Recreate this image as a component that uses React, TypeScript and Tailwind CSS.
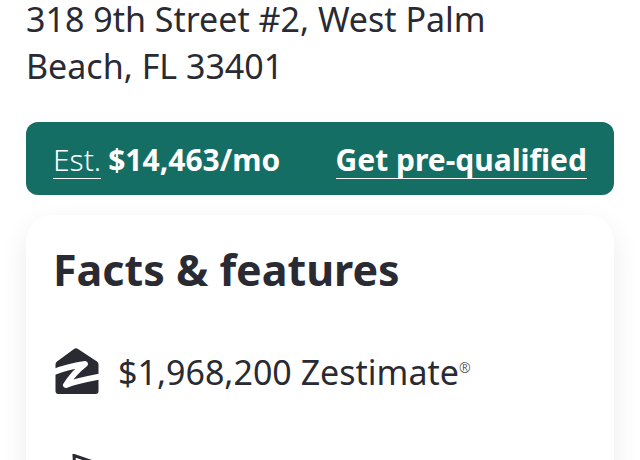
function ZestimateIcon() {
  return (
    <svg className="h-[48px] w-[46px] shrink-0" viewBox="0 0 46 48" fill="none" aria-hidden="true">
      <path d="M21 1Q23 -.5 25 1L44 13.500Q45.500 14.500 45.500 16.500V43Q45.500 46 42.500 46H5.500Q2.500 46 2.500 43V16.500Q2.500 14.500 4 13.500Z" fill="#2a2a33" />
      <path d="M1 24C12 19.500 22 17.500 32 16C25 21.500 18 29 13 37C23 33 34 31 47 28.500" stroke="white" strokeWidth="6" strokeLinejoin="round" />
    </svg>
  );
}

function TagIcon() {
  return (
    <svg className="h-[48px] w-[46px] shrink-0" viewBox="0 0 46 48" fill="none" stroke="#2a2a33" strokeWidth="3" aria-hidden="true">
      <path d="M21 1.500L46 10L43 26L29 44L11 31L22 16Z" />
    </svg>
  );
}

export default function App() {
  return (
    <main className="h-screen overflow-hidden bg-white px-[26px] font-['Noto_Sans',sans-serif] text-[#2a2a33]">
      <h1 className="-mt-1 max-w-[500px] text-[34px] leading-[47px] font-normal">
        318 9th Street #2, West Palm Beach, FL 33401
      </h1>

      <section className="mt-8 flex items-center justify-between rounded-xl bg-[#156e64] px-[27px] pt-[19px] pb-4 text-[30px] leading-[37px] text-white">
        <p className="flex gap-[7px]">
          <button type="button" className="border-b border-white font-light">Est.</button>
          <strong className="font-bold">$14,463/mo</strong>
        </p>
        <a href="#prequalify" className="border-b border-white font-bold">Get pre-qualified</a>
      </section>

      <section className="mt-5 rounded-[26px] bg-white px-[27px] pt-7 shadow-[0_10px_28px_rgba(0,0,0,0.08)]">
        <h2 className="text-[43px] leading-[54px] font-bold">Facts &amp; features</h2>
        <ul className="mt-[50px] flex flex-col gap-[58px]">
          <li className="flex items-center gap-[19px]">
            <ZestimateIcon />
            <p className="pt-px text-[34px] leading-[48px]">
              $1,968,200 Zestimate<sup className="-top-3 text-[14px] font-light">®</sup>
            </p>
          </li>
          <li><TagIcon /></li>
        </ul>
      </section>
    </main>
  );
}
